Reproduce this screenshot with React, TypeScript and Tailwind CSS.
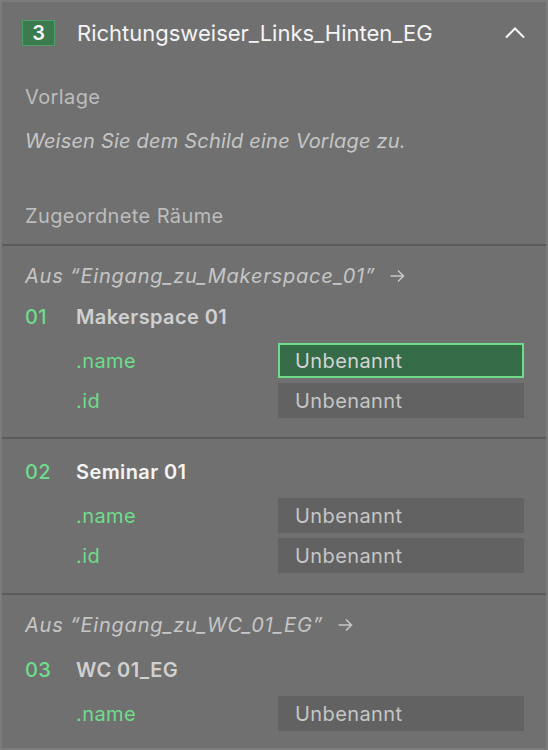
const rooms = [
  {
    source: "Eingang_zu_Makerspace_01",
    top: "mt-[16px]",
    gap: "mt-[17px]",
    items: [
      { no: "01", name: "Makerspace 01", active: false, fields: [".name", ".id"], focused: ".name" },
      { no: "02", name: "Seminar 01", active: true, fields: [".name", ".id"], focused: "" },
    ],
  },
  {
    source: "Eingang_zu_WC_01_EG",
    top: "mt-[20px]",
    gap: "mt-[21px]",
    items: [{ no: "03", name: "WC 01_EG", active: false, fields: [".name"], focused: "" }],
  },
];

const Arrow = () => (
  <svg width="17" height="16" viewBox="0 0 17 16" fill="none" stroke="#c6c6c6" strokeWidth="1.6" className="ml-[14px]">
    <path d="M1.5 8h13.5M9 2.5l5.5 5.5L9 13.5" />
  </svg>
);

const Field = ({ label, focused }: { label: string; focused: boolean }) => (
  <div className="flex items-center">
    <span className="w-[276px] pl-[74px] text-[20px] leading-[24px] text-[#6fdc8c]">{label}</span>
    <div
      className={
        focused
          ? "flex h-[35px] w-[246px] items-center border-2 border-[#6fdc8c] bg-[#366b48] pl-[15px] text-[20px] text-[#d4d4d4]"
          : "flex h-[35px] w-[246px] items-center bg-[#626262] pl-[17px] text-[20px] text-[#c6c6c6]"
      }
    >
      Unbenannt
    </div>
  </div>
);

const Room = ({ no, name, active, fields, focused }: { no: string; name: string; active: boolean; fields: string[]; focused: string }) => (
  <div>
    <div className="flex items-center text-[20px] leading-[24px]">
      <span className="w-[74px] pl-[23px] font-medium text-[#6fdc8c]">{no}</span>
      <span className={active ? "font-semibold text-[#f4f4f4]" : "font-semibold text-[#d0d0d0]"}>{name}</span>
    </div>
    <div className="mt-[14px] flex flex-col gap-[5px]">
      {fields.map((f) => (
        <Field key={f} label={f} focused={f === focused} />
      ))}
    </div>
  </div>
);

export default function App() {
  return (
    <div className="h-[750px] w-[548px] border-2 border-[#7b7b7b] bg-[#707070] font-['Inter',sans-serif] tracking-[0.4px]">
      <div className="mt-[18px] flex h-[26px] items-center pl-[20px] pr-[21px]">
        <div className="flex h-[26px] w-[33px] items-center justify-center border-[1.5px] border-[#4fa068] bg-[#3c7a50] text-[20px] font-semibold tracking-normal text-[#f4f4f4]">
          3
        </div>
        <span className="ml-[22px] text-[22px] leading-[26px] tracking-normal text-[#f4f4f4]">Richtungsweiser_Links_Hinten_EG</span>
        <svg width="20" height="12" viewBox="0 0 20 12" fill="none" stroke="#f4f4f4" strokeWidth="2" className="ml-auto">
          <path d="M1 10.5l9-9 9 9" />
        </svg>
      </div>

      <div className="px-[23px]">
        <p className="mt-[39px] text-[20px] leading-[24px] text-[#bdbdbd]">Vorlage</p>
        <p className="mt-[20px] text-[20px] italic leading-[24px] tracking-[0.2px] text-[#c6c6c6]">Weisen Sie dem Schild eine Vorlage zu.</p>
        <p className="mt-[51px] text-[20px] leading-[24px] text-[#bdbdbd]">Zugeordnete Räume</p>
      </div>

      {rooms.map((group) => (
        <div key={group.source} className={group.top + " border-t-2 border-[#5a5a5a]"}>
          <div className="mt-[18px] flex items-center px-[23px] text-[20px] italic leading-[24px] tracking-[0.8px] text-[#c6c6c6]">
            Aus “{group.source}”
            <Arrow />
          </div>
          {group.items.map((r, i) => (
            <div key={r.no} className={i === 0 ? group.gap : "mt-[19px] border-t-2 border-[#5a5a5a] pt-[21px]"}>
              <Room {...r} />
            </div>
          ))}
        </div>
      ))}
    </div>
  );
}
